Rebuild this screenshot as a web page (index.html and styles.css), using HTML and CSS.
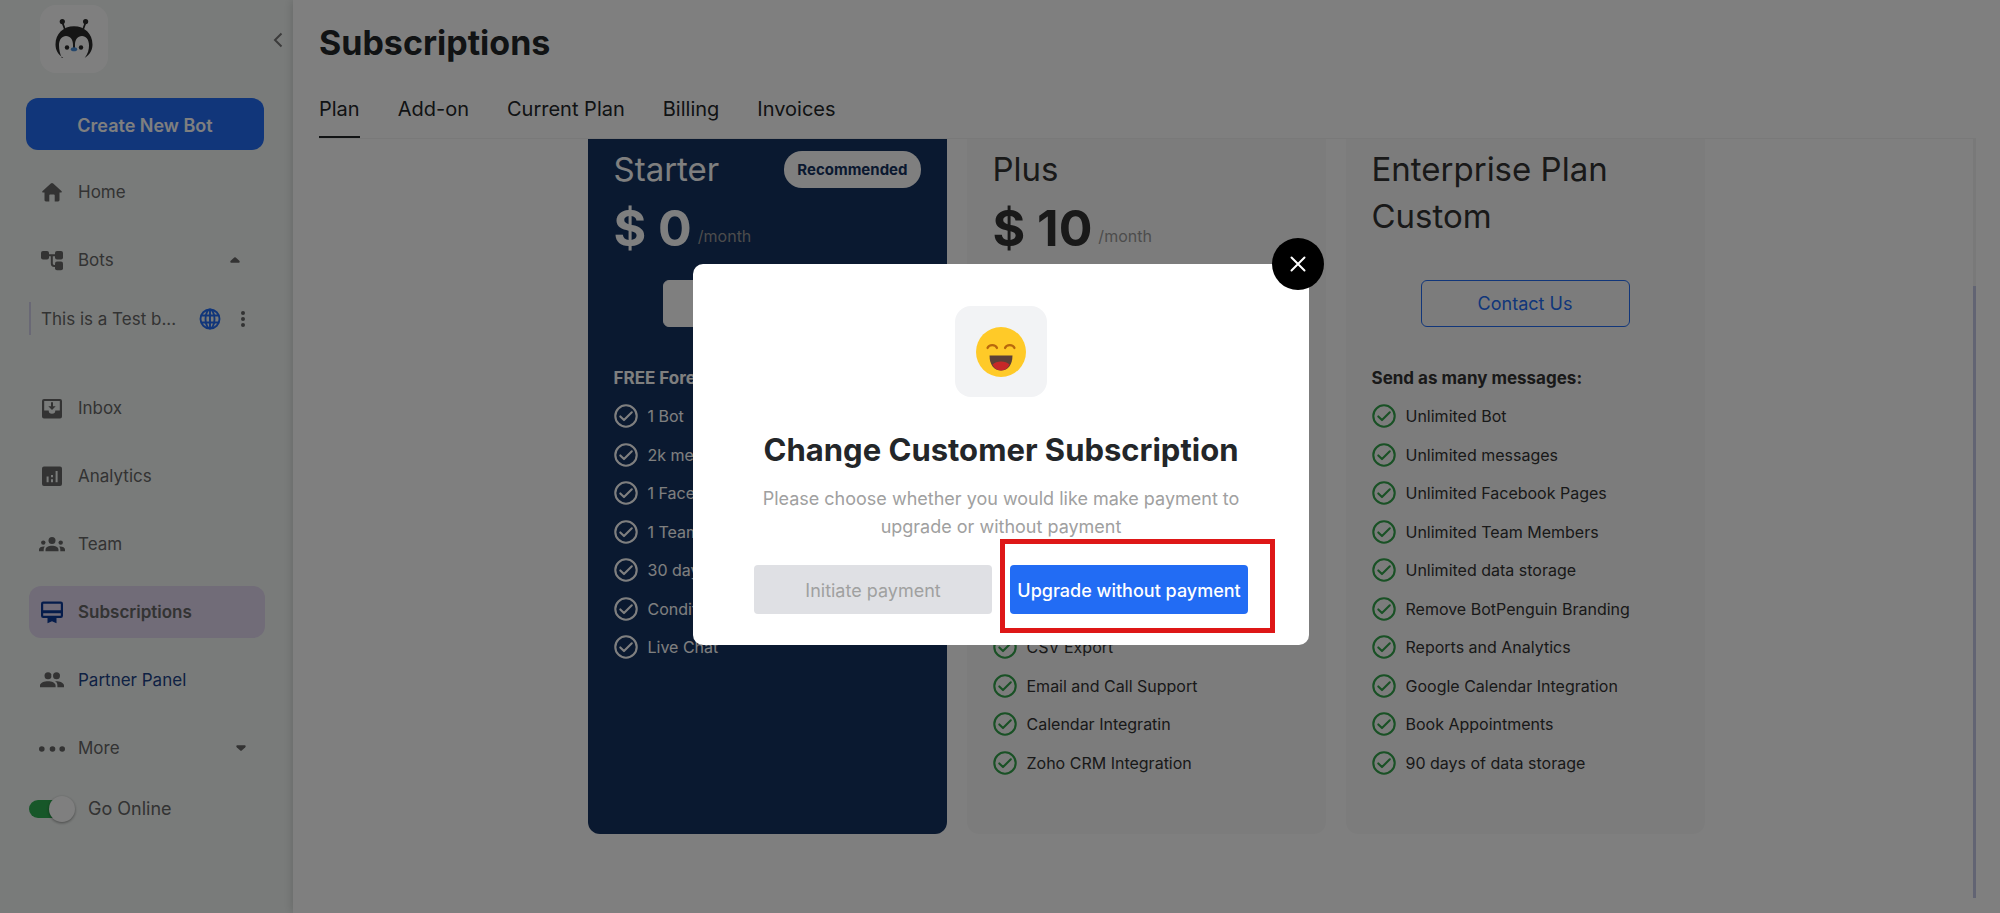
FILE: index.html
```html
<!DOCTYPE html>
<html lang="en">
<head>
<meta charset="utf-8">
<meta name="viewport" content="width=device-width, initial-scale=1">
<title>Subscriptions</title>
<link rel="stylesheet" href="styles.css">
</head>
<body>
<svg class="sprite" aria-hidden="true">
  <symbol id="check" viewBox="0 0 24 24"><circle cx="12" cy="12" r="10.7" fill="none" stroke="currentColor" stroke-width="2.1"/><path d="M6.3 12.4l3.7 3.7 7.8-7.8" fill="none" stroke="currentColor" stroke-width="2.1" stroke-linecap="round" stroke-linejoin="round"/></symbol>
</svg>
<div class="app">
  <aside class="sidebar">
    <div class="brand">
      <a class="logo" href="#" aria-label="BotPenguin">
        <svg viewBox="0 0 40 42" width="40" height="42">
          <path d="M11.5 13L8.6 5M28.5 13l2.9-8" stroke="#2a2a2a" stroke-width="1.8" fill="none"/>
          <circle cx="8.3" cy="3.6" r="2.6" fill="#2a2a2a"/><circle cx="31.6" cy="3.6" r="2.6" fill="#2a2a2a"/>
          <path d="M9.3 40C3.6 36.300 1.500 31.500 1.500 26.500 1.500 15.500 9.500 8.200 20 8.200s18.500 7.300 18.500 18.300c0 5-2.100 9.800-7.800 13.500 3.300-4.400 4.300-8.400 4.300-12.500 0-6-3-9.500-7-9.500-4.500 0-7 3.500-7 9v3h-2v-3c0-5.500-2.500-9-7-9-4 0-7 3.500-7 9.500 0 4.100 1 8.100 2.800 12.500z" fill="#2a2a2a"/>
          <circle cx="13" cy="29.500" r="2.200" fill="#2a2a2a"/><circle cx="27" cy="29.500" r="2.200" fill="#2a2a2a"/>
          <ellipse cx="20" cy="31.200" rx="3.200" ry="2" fill="#4a8fd8"/>
        </svg>
      </a>
      <button class="collapse" type="button" aria-label="Collapse sidebar">
        <svg viewBox="0 0 10 16" width="10" height="16"><path d="M8.500 1.500L2 8l6.500 6.500" fill="none" stroke="currentColor" stroke-width="2"/></svg>
      </button>
    </div>
    <button class="create" type="button">Create New Bot</button>
    <nav class="nav">
      <a class="item" href="#"><svg class="ico" viewBox="0 0 26 26"><path d="M11.800 4.600a1.800 1.800 0 0 1 2.400 0l8.200 7.300c.8.700.4 1.700-.6 1.700h-1.300v7.400c0 .8-.6 1.400-1.400 1.400h-3.400v-6.200c0-.5-.3-.8-.8-.8h-3.800c-.5 0-.8.300-.8.800v6.200H6.900c-.8 0-1.400-.6-1.400-1.400v-7.400H4.200c-1 0-1.400-1-.6-1.700z"/></svg><span>Home</span></a>
      <a class="item" href="#"><svg class="ico" viewBox="0 0 26 26"><rect x="2" y="4" width="8" height="8.500" rx="2"/><rect x="16" y="4" width="8" height="8.500" rx="2"/><rect x="16" y="14.500" width="8" height="8.800" rx="2"/><path d="M10 8.200h6M12.800 8.200v8.300q0 2.400 2.400 2.400H16" fill="none" stroke="currentColor" stroke-width="2"/></svg><span>Bots</span><svg class="caret caret-open" viewBox="0 0 10 6"><path d="M4.200.5a1.200 1.200 0 0 1 1.600 0l3.500 3.200c.8.800.4 2-.8 2h-7c-1.200 0-1.600-1.200-.8-2z"/></svg></a>
      <div class="sub">
        <a href="#">This is a Test b...</a>
        <svg class="globe" viewBox="0 0 22 22"><g fill="none" stroke="currentColor" stroke-width="1.900"><circle cx="11" cy="11" r="9.500"/><ellipse cx="11" cy="11" rx="4.500" ry="9.500"/><path d="M11 1.500v19M2.300 7.500h17.400M2.300 14.500h17.400"/></g></svg>
        <button class="kebab" type="button" aria-label="Bot options"><svg viewBox="0 0 4 16" width="4" height="16"><circle cx="2" cy="2" r="2"/><circle cx="2" cy="8" r="2"/><circle cx="2" cy="14" r="2"/></svg></button>
      </div>
      <a class="item" href="#"><svg class="ico" viewBox="0 0 26 26"><path fill-rule="evenodd" d="M5 4h16a2 2 0 0 1 2 2v15.500a2 2 0 0 1-2 2H5a2 2 0 0 1-2-2V6a2 2 0 0 1 2-2zm.2 2v9.500h4.500a3.300 3.300 0 0 0 6.600 0h4.500V6zM12 7.200h2v4h2.700L13 15l-3.700-3.800H12z"/></svg><span>Inbox</span></a>
      <a class="item" href="#"><svg class="ico" viewBox="0 0 26 26"><path fill-rule="evenodd" d="M5 3.500h16a2 2 0 0 1 2 2V21a2 2 0 0 1-2 2H5a2 2 0 0 1-2-2V5.500a2 2 0 0 1 2-2zM7.600 13.500v5.700h2v-5.700zM12 16.200v3h2v-3zM12 12v2.200h2V12zM16.600 8v11.200h2V8z"/></svg><span>Analytics</span></a>
      <a class="item" href="#"><svg class="ico" viewBox="0 0 26 26"><circle cx="13" cy="9.500" r="3.500"/><path d="M6.500 20.200v-1.500c0-2.600 3.300-3.900 6.500-3.900s6.500 1.300 6.500 3.900v1.500z"/><circle cx="4.300" cy="11.600" r="2.200"/><circle cx="21.700" cy="11.600" r="2.200"/><path d="M0 20.200v-1.700c0-1.900 2.200-3 4.700-3 .4 0 .8 0 1.100.1-.8.900-1.100 2-1.100 3.100v1.500zM26 20.200v-1.700c0-1.900-2.200-3-4.700-3-.4 0-.8 0-1.100.1.800.9 1.100 2 1.100 3.100v1.500z"/></svg><span>Team</span></a>
      <a class="item active" href="#" aria-current="page"><svg class="ico" viewBox="0 0 26 26"><path fill-rule="evenodd" d="M4.200 2.500h17.600A2.200 2.200 0 0 1 24 4.700v12a2.200 2.200 0 0 1-2.200 2.200h-4.300v5.300L13 22.300l-4.500 1.900v-5.300H4.200A2.200 2.200 0 0 1 2 16.700v-12a2.200 2.200 0 0 1 2.200-2.200zM4.200 4.700v6.500h17.600V4.700zm0 9.500v2.500h17.600v-2.500z"/></svg><span>Subscriptions</span></a>
      <a class="item partner" href="#"><svg class="ico" viewBox="0 0 26 26"><circle cx="9" cy="8.700" r="3.500"/><circle cx="17.500" cy="8.700" r="3.500"/><path d="M1 20.300v-1.800c0-2.900 4.400-4.300 8-4.300s7.600 1.400 7.600 4.300v1.800zM17 14.200c3.500 0 8 1.400 8 4.300v1.800h-6.600v-1.800c0-1.800-.4-3.100-2.500-4.200z"/><circle cx="13.250" cy="8.700" r=".8" fill="#f3f7f5"/></svg><span>Partner Panel</span></a>
      <a class="item" href="#"><svg class="ico" viewBox="0 0 26 26"><circle cx="2.800" cy="14" r="2.800"/><circle cx="13.500" cy="14" r="2.800"/><circle cx="23.200" cy="14" r="2.800"/></svg><span>More</span><svg class="caret" viewBox="0 0 10 6"><path d="M4.200 5.500a1.200 1.200 0 0 0 1.600 0l3.500-3.200c.8-.8.400-2-.8-2h-7c-1.200 0-1.600 1.200-.8 2z"/></svg></a>
    </nav>
    <label class="online"><input type="checkbox" checked><span>Go Online</span></label>
  </aside>
  <main class="main">
    <h1>Subscriptions</h1>
    <nav class="tabs">
      <a class="current" href="#" aria-current="page">Plan</a><a href="#">Add-on</a><a href="#">Current Plan</a><a href="#">Billing</a><a href="#">Invoices</a>
    </nav>
    <div class="scroller">
      <div class="plans">
        <section class="plan starter">
          <div class="head"><h2>Starter</h2><span class="badge">Recommended</span></div>
          <p class="price"><strong>$ 0</strong><span>/month</span></p>
          <button class="action" type="button" aria-label="Choose Starter"></button>
          <h3>FREE Forever</h3>
          <ul>
            <li><svg><use href="#check"/></svg>1 Bot</li>
            <li><svg><use href="#check"/></svg>2k messages</li>
            <li><svg><use href="#check"/></svg>1 Facebook</li>
            <li><svg><use href="#check"/></svg>1 Team</li>
            <li><svg><use href="#check"/></svg>30 days</li>
            <li><svg><use href="#check"/></svg>Conditions</li>
            <li><svg><use href="#check"/></svg>Live Chat</li>
          </ul>
        </section>
        <section class="plan">
          <div class="head"><h2>Plus</h2></div>
          <p class="price"><strong>$ 10</strong><span>/month</span></p>
          <ul class="last-rows">
            <li><svg><use href="#check"/></svg>CSV Export</li>
            <li><svg><use href="#check"/></svg>Email and Call Support</li>
            <li><svg><use href="#check"/></svg>Calendar Integratin</li>
            <li><svg><use href="#check"/></svg>Zoho CRM Integration</li>
          </ul>
        </section>
        <section class="plan">
          <div class="head tall"><h2>Enterprise Plan Custom</h2></div>
          <button class="action" type="button">Contact Us</button>
          <h3>Send as many messages:</h3>
          <ul>
            <li><svg><use href="#check"/></svg>Unlimited Bot</li>
            <li><svg><use href="#check"/></svg>Unlimited messages</li>
            <li><svg><use href="#check"/></svg>Unlimited Facebook Pages</li>
            <li><svg><use href="#check"/></svg>Unlimited Team Members</li>
            <li><svg><use href="#check"/></svg>Unlimited data storage</li>
            <li><svg><use href="#check"/></svg>Remove BotPenguin Branding</li>
            <li><svg><use href="#check"/></svg>Reports and Analytics</li>
            <li><svg><use href="#check"/></svg>Google Calendar Integration</li>
            <li><svg><use href="#check"/></svg>Book Appointments</li>
            <li><svg><use href="#check"/></svg>90 days of data storage</li>
          </ul>
        </section>
      </div>
      <div class="track"><div class="thumb"></div></div>
    </div>
  </main>
</div>
<div class="overlay">
  <div class="modal" role="dialog" aria-modal="true" aria-labelledby="dialog-title">
    <button class="close" type="button" aria-label="Close"><svg viewBox="0 0 16 16" width="16" height="16"><path d="M1.500 1.500l13 13M14.500 1.500l-13 13" stroke="#fff" stroke-width="2" stroke-linecap="round"/></svg></button>
    <div class="emoji">
      <svg viewBox="0 0 50 50" width="50" height="50">
        <circle cx="25" cy="25" r="25" fill="#ffca28"/>
        <path d="M11.500 21c1.500-3.800 8-3.800 9.500 0M29 21c1.500-3.800 8-3.800 9.500 0" fill="none" stroke="#b9680c" stroke-width="2.200" stroke-linecap="round"/>
        <path d="M13.500 28.500h23c0 9-4.500 15-11.500 15s-11.500-6-11.500-15z" fill="#5d4037"/>
        <path d="M16.500 37.500c2-2 5-3 8.500-3s6.500 1 8.500 3c-1.700 3.800-4.600 6-8.500 6s-6.800-2.200-8.500-6z" fill="#c62828"/>
      </svg>
    </div>
    <h2 id="dialog-title">Change Customer Subscription</h2>
    <p>Please choose whether you would like make payment to upgrade or without payment</p>
    <div class="choices">
      <button class="choice" type="button">Initiate payment</button>
      <div class="marked"><button class="choice primary" type="button">Upgrade without payment</button></div>
    </div>
  </div>
</div>
</body>
</html>
```
FILE: styles.css
```css
* { box-sizing: border-box; }
body {
  margin: 0;
  font-family: Inter, "Liberation Sans", sans-serif;
  font-size: 18px;
  line-height: 28px;
  color: #232629;
  background: #fff;
}
h1, h2, h3, p, ul { margin: 0; padding: 0; }
a { color: inherit; text-decoration: none; }
button { font: inherit; color: inherit; border: 0; background: none; padding: 0; }
svg { fill: currentColor; flex: none; }
.sprite { position: absolute; width: 0; height: 0; }

.app { display: flex; height: 100vh; overflow: hidden; }

.sidebar { flex: 0 0 293px; background: #f3f7f5; color: #666; }
.brand { display: flex; justify-content: space-between; align-items: center; padding: 5px 10px 0 40px; height: 73px; }
.logo { display: flex; align-items: center; justify-content: center; width: 68px; height: 68px; border-radius: 16px; background: #fff; }
.collapse { display: flex; align-items: center; padding-top: 2px; color: #777; }
.create {
  display: block;
  width: 238px;
  height: 52px;
  margin: 25px 0 16px 26px;
  padding-top: 3px;
  border-radius: 12px;
  background: #226cf4;
  color: #fff;
  font-weight: 600;
}
.nav { padding: 0 28px 0 29px; font-size: 17px; }
.item { display: flex; align-items: center; height: 52px; margin-bottom: 16px; padding: 0 19px 0 10px; border-radius: 12px; }
.ico { width: 26px; height: 26px; margin-right: 13px; }
.item span { flex: 1; }
.caret { width: 10px; height: 6px; }
.caret-open { margin-right: 6px; }
.active { background: #e2d8f0; font-weight: 600; }
.active .ico { color: #0b3896; }
.partner { color: #1d4287; }
.partner .ico { color: #666; }
.sub { display: flex; align-items: center; height: 33px; margin-bottom: 47px; padding: 0 18px 0 10px; border-left: 2px solid #d3d0ea; }
.sub a { flex: 1; }
.globe { width: 22px; height: 22px; margin-right: 20px; color: #226cf4; }
.kebab { display: flex; margin-right: 2px; }
.online { display: flex; align-items: center; height: 38px; margin-left: 29px; gap: 13px; }
.online input {
  appearance: none;
  display: flex;
  align-items: center;
  justify-content: flex-end;
  width: 46px;
  height: 18px;
  margin: 0;
  border-radius: 9px;
  background: linear-gradient(to right, #2fae52 34px, transparent 34px);
}
.online input::before { content: ""; width: 26px; height: 26px; border-radius: 50%; background: #fff; box-shadow: 0 1px 3px rgba(0, 0, 0, .4); }

.main { position: relative; flex: 1; display: flex; flex-direction: column; min-width: 0; padding: 19px 24px 0 26px; background: #fff; box-shadow: 0 0 10px rgba(0, 0, 0, .18); }
h1 { font-size: 34px; line-height: 48px; font-weight: 700; }
.tabs { display: flex; gap: 38px; margin-top: 21px; border-bottom: 1px solid #f2f2f2; font-size: 20px; }
.tabs a { padding: 7px 0 13px; border-bottom: 2px solid transparent; }
.tabs .current { border-color: #232629; }
.scroller { flex: 1; display: flex; overflow: hidden; }
.plans { flex: 1; display: grid; grid-template-columns: repeat(3, 359px); gap: 20px; justify-content: center; align-items: start; }
.track { width: 3px; margin-bottom: 15px; padding-top: 147px; background: #f2f2f2; }
.thumb { height: 100%; background: #c4c8e6; }

.plan { display: flex; flex-direction: column; height: 695px; padding: 7px 26px 52px; border-radius: 0 0 12px 12px; background: #f9f9f9; color: #333; }
.starter { background: #143260; color: #fff; }
.head { display: flex; justify-content: space-between; align-items: center; height: 47px; }
.head h2 { font-size: 33px; line-height: 47px; font-weight: 400; }
.tall { height: 110px; align-items: flex-start; }
.badge { height: 37px; padding: 0 13px; border-radius: 18px; background: #fff; color: #143260; font-size: 15px; line-height: 37px; font-weight: 700; }
.price { display: flex; align-items: flex-start; gap: 6px; height: 63px; color: #999; font-size: 16px; line-height: 87px; }
.price strong { font-size: 50px; line-height: 71px; color: #333; }
.starter .price strong { color: #fff; }
.action { display: block; width: 209px; height: 47px; margin: 24px auto 36px; border: 1px solid #226cf4; border-radius: 6px; color: #226cf4; }
.starter .action { border-color: #fff; background: #fff; }
.plan h3 { font-size: 17px; line-height: 30px; font-weight: 700; }
.plan ul { display: grid; grid-template-rows: repeat(10, 1fr); height: 385px; margin-top: auto; list-style: none; font-size: 16px; }
.plan .last-rows { grid-template-rows: repeat(4, 1fr); height: 154px; }
.plan li { display: flex; align-items: center; gap: 10px; }
.plan li svg { width: 24px; height: 24px; color: #33a24a; }
.starter li svg { color: #fff; }

.overlay { position: fixed; inset: 0; display: flex; align-items: center; justify-content: center; padding: 0 0 4px 2px; background: rgba(0, 0, 0, .5); }
.modal { position: relative; display: flex; flex-direction: column; align-items: center; width: 616px; padding: 42px 61px 31px; border-radius: 10px; background: #fff; }
.close { position: absolute; top: -26px; right: -15px; display: flex; align-items: center; justify-content: center; width: 52px; height: 52px; border-radius: 50%; background: #000; }
.emoji { display: flex; align-items: center; justify-content: center; width: 92px; height: 91px; border-radius: 16px; background: #f2f3f5; }
.modal h2 { margin-top: 29px; font-size: 31px; line-height: 48px; font-weight: 700; white-space: nowrap; }
.modal p { margin-top: 11px; color: #a0a0a0; text-align: center; }
.choices { display: grid; grid-template-columns: 1fr 1fr; gap: 18px; width: 100%; margin-top: 24px; }
.choice { width: 100%; height: 49px; padding-top: 2px; border-radius: 4px; background: #dfe0e4; color: #a0a0a0; }
.primary { background: #226cf4; color: #fff; font-weight: 500; }
.marked { position: relative; }
.marked::after { content: ""; position: absolute; inset: -26px -27px -19px -10px; border: 5px solid #de1717; pointer-events: none; }
```
